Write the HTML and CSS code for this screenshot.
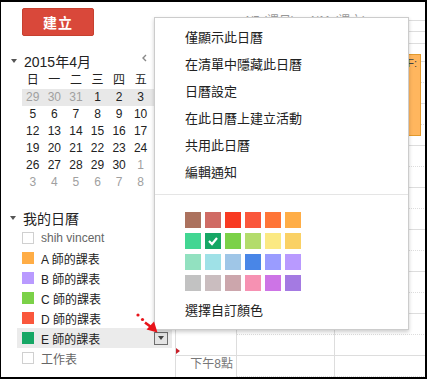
FILE: index.html
```html
<!DOCTYPE html>
<html lang="zh-Hant">
<head>
    <meta charset="UTF-8">
    <title>日曆</title>
    <link rel="stylesheet" href="styles.css">
</head>
<body>

    <div class="frame">
        <!-- Barra lateral -->
        <div class="sidebar">
            <button class="create-btn">建立</button>

            <div class="mini-head">
                <span class="tri"></span>
                <span class="mini-title">2015年4月</span>
                <svg class="chev" width="6" height="8" viewBox="0 0 6 8"><polyline points="5,1 2,4 5,7" fill="none" stroke="#888" stroke-width="1.4"/></svg>
            </div>

            <div class="mini-cal">
                <div class="dow">日</div><div class="dow">一</div><div class="dow">二</div><div class="dow">三</div><div class="dow">四</div><div class="dow">五</div><div class="dow">六</div>
                <div class="week sel">
                    <span class="off">29</span><span class="off">30</span><span class="off">31</span><span>1</span><span>2</span><span>3</span><span>4</span>
                </div>
                <div class="week">
                    <span>5</span><span>6</span><span>7</span><span>8</span><span>9</span><span>10</span><span>11</span>
                </div>
                <div class="week">
                    <span>12</span><span>13</span><span>14</span><span>15</span><span>16</span><span>17</span><span>18</span>
                </div>
                <div class="week">
                    <span>19</span><span>20</span><span>21</span><span>22</span><span>23</span><span>24</span><span>25</span>
                </div>
                <div class="week">
                    <span>26</span><span>27</span><span>28</span><span>29</span><span>30</span><span class="off">1</span><span class="off">2</span>
                </div>
                <div class="week">
                    <span class="off">3</span><span class="off">4</span><span class="off">5</span><span class="off">6</span><span class="off">7</span><span class="off">8</span><span class="off">9</span>
                </div>
            </div>

            <div class="cals-head">
                <span class="tri"></span>
                <span class="cals-title">我的日曆</span>
            </div>

            <div class="cal-list">
                <div class="cal-row muted"><span class="box"></span>shih vincent</div>
                <div class="cal-row"><span class="box" style="background:#ffad46"></span>A 師的課表</div>
                <div class="cal-row"><span class="box" style="background:#b99aff"></span>B 師的課表</div>
                <div class="cal-row"><span class="box" style="background:#7bd148"></span>C 師的課表</div>
                <div class="cal-row"><span class="box" style="background:#fa573c"></span>D 師的課表</div>
                <div class="cal-row active"><span class="box" style="background:#16a765"></span>E 師的課表<span class="drop"><span class="drop-tri"></span></span></div>
                <div class="cal-row muted"><span class="box"></span>工作表</div>
            </div>
        </div>

        <!-- Grade do calendário -->
        <div class="main">
            <div class="main-head">4/5 (週日) – 4/11 (週六)</div>
            <div class="band band1"></div>
            <div class="band band2"></div>
            <div class="band band3"></div>
            <div class="grid">
                <div class="hour"><div class="time"></div><div class="day"><div class="half"></div></div><div class="day"><div class="half"></div></div></div>
                <div class="hour"><div class="time"></div><div class="day"><div class="half"></div></div><div class="day"><div class="half"></div></div></div>
                <div class="hour"><div class="time"></div><div class="day"><div class="half"></div></div><div class="day"><div class="half"></div></div></div>
                <div class="hour"><div class="time"></div><div class="day"><div class="half"></div></div><div class="day"><div class="half"></div></div></div>
                <div class="hour"><div class="time"></div><div class="day"><div class="half"></div></div><div class="day"><div class="half"></div></div></div>
                <div class="hour"><div class="time"></div><div class="day"><div class="half"></div></div><div class="day"><div class="half"></div></div></div>
                <div class="hour"><div class="time"></div><div class="day"><div class="half"></div></div><div class="day"><div class="half"></div></div></div>
                <div class="hour"><div class="time">下午8點</div><div class="day"><div class="half"></div></div><div class="day"><div class="half"></div></div></div>
            </div>

            <div class="event">F:</div>
            <span class="now"></span>
        </div>

        <!-- Menu do calendário -->
        <div class="menu">
            <div class="menu-item">僅顯示此日曆</div>
            <div class="menu-item">在清單中隱藏此日曆</div>
            <div class="menu-item">日曆設定</div>
            <div class="menu-item">在此日曆上建立活動</div>
            <div class="menu-item">共用此日曆</div>
            <div class="menu-item">編輯通知</div>
            <div class="sep"></div>
            <div class="swatches">
                <span style="background:#ac725e"></span>
                <span style="background:#d06b64"></span>
                <span style="background:#f83a22"></span>
                <span style="background:#fa573c"></span>
                <span style="background:#ff7537"></span>
                <span style="background:#ffad46"></span>
                <span style="background:#42d692"></span>
                <span style="background:#16a765"><svg width="16" height="16" viewBox="0 0 16 16"><polyline points="4,8 7,11 12,5" fill="none" stroke="#fff" stroke-width="2.2"/></svg></span>
                <span style="background:#7bd148"></span>
                <span style="background:#b3dc6c"></span>
                <span style="background:#fbe983"></span>
                <span style="background:#fad165"></span>
                <span style="background:#92e1c0"></span>
                <span style="background:#9fe1e7"></span>
                <span style="background:#9fc6e7"></span>
                <span style="background:#4986e7"></span>
                <span style="background:#9a9cff"></span>
                <span style="background:#b99aff"></span>
                <span style="background:#c2c2c2"></span>
                <span style="background:#cabdbf"></span>
                <span style="background:#cca6ac"></span>
                <span style="background:#f691b2"></span>
                <span style="background:#cd74e6"></span>
                <span style="background:#a47ae2"></span>
            </div>
            <div class="menu-item custom">選擇自訂顏色</div>
        </div>

        <!-- Seta vermelha -->
        <svg class="pointer" width="28" height="26" viewBox="0 0 28 26">
            <circle cx="5" cy="5" r="1.6" fill="#e8141a"/>
            <circle cx="9.5" cy="9.5" r="1.6" fill="#e8141a"/>
            <line x1="12" y1="12.5" x2="18" y2="17" stroke="#e8141a" stroke-width="2.6"/>
            <polygon points="24.5,22.5 13.5,19.5 21,11.5" fill="#e8141a"/>
        </svg>
    </div>

</body>
</html>
```

FILE: styles.css
```css
* {
    margin: 0;
    padding: 0;
    box-sizing: border-box;
}
body {
    font-family: "Liberation Sans", "Noto Sans CJK TC", sans-serif;
    background: #fff;
    overflow: hidden;
}
.frame {
    width: 427px;
    height: 379px;
    border-style: solid;
    border-color: #000;
    border-width: 2px 2px 2px 1px;
    display: flex;
    position: relative;
    overflow: hidden;
}

/* barra lateral */
.sidebar {
    width: 174px;
    flex-shrink: 0;
}
.create-btn {
    display: block;
    margin: 6px 0 0 21px;
    width: 72px;
    height: 28px;
    border: 1px solid #c6402f;
    border-radius: 2px;
    background-color: #d9483a;
    color: #fff;
    font-family: inherit;
    font-size: 14px;
    font-weight: bold;
    letter-spacing: 1px;
}
.tri {
    width: 0;
    height: 0;
    border-left: 3.5px solid transparent;
    border-right: 3.5px solid transparent;
    border-top: 4px solid #555;
}
.mini-head {
    display: flex;
    align-items: center;
    height: 18px;
    margin-top: 16px;
    padding-left: 10px;
}
.mini-title {
    margin-left: 7px;
    font-size: 14px;
    color: #222;
}
.chev {
    margin-left: auto;
    margin-right: 28px;
    margin-bottom: 7px;
}
.mini-cal {
    margin: 2px 0 0 21px;
    width: 151px;
    display: grid;
    grid-template-columns: repeat(7, 1fr);
}
.dow {
    height: 17px;
    line-height: 17px;
    text-align: center;
    font-size: 12px;
    color: #222;
}
.week {
    grid-column: 1 / -1;
    display: grid;
    grid-template-columns: repeat(7, 1fr);
}
.week.sel {
    background-color: #e8e8e8;
}
.week span {
    height: 17px;
    line-height: 17px;
    text-align: center;
    font-size: 12px;
    color: #222;
}
.week span.off {
    color: #a0a0a0;
}
.cals-head {
    display: flex;
    align-items: center;
    height: 18px;
    margin-top: 18px;
    padding-left: 9px;
}
.cals-title {
    margin-left: 7px;
    font-size: 14px;
    color: #222;
}
.cal-list {
    margin-top: 1px;
}
.cal-row {
    display: flex;
    align-items: center;
    height: 20px;
    width: 155px;
    margin-left: 16px;
    padding-left: 5px;
    font-size: 12px;
    color: #222;
}
.cal-row.muted {
    color: #666;
}
.cal-row.active {
    background-color: #ebebeb;
}
.box {
    width: 12px;
    height: 12px;
    margin-right: 7px;
    border: 1px solid #d0d0d0;
    background: #fff;
}
.cal-row .box[style] {
    border: none;
}
.drop {
    margin-left: auto;
    margin-right: 4px;
    width: 14px;
    height: 13px;
    border: 1px solid #6d6d6d;
    background-color: #e4e4e4;
    display: flex;
    justify-content: center;
    align-items: center;
}
.drop-tri {
    width: 0;
    height: 0;
    border-left: 3.5px solid transparent;
    border-right: 3.5px solid transparent;
    border-top: 4px solid #444;
}

/* grade */
.main {
    flex: 1;
    position: relative;
    overflow: hidden;
}
.main-head {
    height: 18px;
    padding: 12px 0 0 68px;
    font-size: 12px;
    line-height: 14px;
    color: #999;
    white-space: nowrap;
    overflow: hidden;
}
.band {
    border-top: 1px solid #ddd;
}
.band1 { height: 11px; }
.band2 { height: 12px; }
.band3 { height: 18px; }
.grid {
    border-left: 1px solid #ddd;
}
.hour {
    display: grid;
    grid-template-columns: 61px 98px 98px;
    height: 42px;
    border-top: 1px solid #ddd;
}
.time {
    border-right: 1px solid #ddd;
    padding: 1px 3px 0 0;
    text-align: right;
    font-size: 12px;
    line-height: 14px;
    color: #777;
}
.day {
    border-right: 1px solid #ddd;
}
.half {
    height: 21px;
    border-bottom: 1px dotted #ddd;
}
.event {
    position: absolute;
    left: 165px;
    top: 52px;
    width: 81px;
    height: 82px;
    background-color: #ffb65e;
    border: 1px solid #e39a2d;
    padding: 2px 3px 0 0;
    text-align: right;
    font-size: 11px;
    color: #444;
}
.now {
    position: absolute;
    left: 1px;
    top: 346px;
    width: 0;
    height: 0;
    border-top: 3px solid transparent;
    border-bottom: 3px solid transparent;
    border-left: 4px solid #c8202a;
}

/* menu */
.menu {
    position: absolute;
    left: 153px;
    top: 15px;
    width: 255px;
    height: 313px;
    background-color: #fff;
    border: 1px solid rgba(0, 0, 0, 0.2);
    box-shadow: 0 2px 4px rgba(0, 0, 0, 0.2);
    padding-top: 6px;
}
.menu-item {
    height: 27px;
    line-height: 27px;
    padding-left: 30px;
    font-size: 13px;
    color: #222;
}
.menu-item.custom {
    margin-top: 6px;
}
.sep {
    height: 1px;
    margin-top: 8px;
    background-color: #e5e5e5;
}
.swatches {
    display: grid;
    grid-template-columns: repeat(6, 16px);
    grid-auto-rows: 16px;
    gap: 5px 4px;
    margin-top: 17px;
    padding-left: 30px;
}
.swatches span {
    display: block;
}
.swatches svg {
    display: block;
}
.pointer {
    position: absolute;
    left: 132px;
    top: 308px;
}
```
